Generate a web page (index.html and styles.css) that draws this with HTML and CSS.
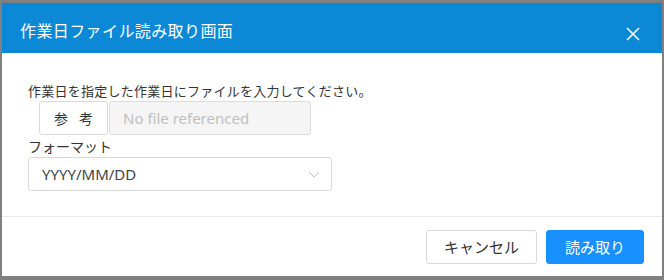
FILE: index.html
```html
<!DOCTYPE html>
<html lang="ja">
<head>
    <meta charset="UTF-8">
    <title>作業日ファイル読み取り画面</title>
    <link rel="stylesheet" href="styles.css">
</head>
<body>
    <div class="modal">
        <div class="modal-header">
            <div class="modal-title">作業日ファイル読み取り画面</div>
            <div class="modal-close">
                <svg width="14" height="14" viewBox="0 0 14 14">
                    <path d="M1 1L13 13M13 1L1 13" stroke="#fff" stroke-width="1.6" fill="none"/>
                </svg>
            </div>
        </div>
        <div class="modal-body">
            <p class="hint">作業日を指定した作業日にファイルを入力してください。</p>
            <div class="file-row">
                <div class="btn-ref">参 考</div>
                <div class="file-name">No file referenced</div>
            </div>
            <div class="label">フォーマット</div>
            <div class="select">
                <span>YYYY/MM/DD</span>
                <svg width="12" height="7" viewBox="0 0 12 7">
                    <path d="M1 1L6 6L11 1" stroke="#c4c4c4" stroke-width="1" fill="none"/>
                </svg>
            </div>
        </div>
        <div class="modal-footer">
            <div class="btn">キャンセル</div>
            <div class="btn btn-primary">読み取り</div>
        </div>
    </div>
</body>
</html>
```

FILE: styles.css
```css
*{
    padding: 0;
    margin: 0;
    box-sizing: border-box;
}
body{
    background-color: #808080;
    padding: 3px 2px 4px 2px;
    font-family: "Noto Sans", "Noto Sans CJK JP", sans-serif;
    color: #333;
}
.modal{
    width: 660px;
    height: 273px;
    background-color: #fff;
    display: flex;
    flex-direction: column;
}
.modal-header{
    height: 50px;
    background-color: #0b88d6;
    display: flex;
    justify-content: space-between;
    align-items: flex-start;
    padding: 16px 22px 0 18px;
}
.modal-title{
    color: #fff;
    font-size: 16px;
    letter-spacing: 0.4px;
    line-height: 22px;
    font-family: "Noto Sans CJK JP", sans-serif;
}
.modal-close{
    margin-top: 8px;
    width: 14px;
    height: 14px;
    display: flex;
}
.modal-body{
    flex: 1;
    padding: 29px 26px 0 26px;
    border-bottom: 1px solid #e8e8e8;
}
.hint{
    font-size: 13px;
    letter-spacing: 0.25px;
    line-height: 18px;
    color: #333;
    font-family: "Noto Sans CJK JP", sans-serif;
}
.file-row{
    display: flex;
    margin: 1px 0 0 11px;
    height: 34px;
}
.btn-ref{
    width: 69px;
    border: 1px solid #d9d9d9;
    border-radius: 3px;
    font-size: 14px;
    word-spacing: 8px;
    line-height: 32px;
    text-align: center;
    color: #333;
    font-family: "Noto Sans CJK JP", sans-serif;
}
.file-name{
    width: 202px;
    margin-left: 1px;
    background-color: #f5f5f5;
    border: 1px solid #dcdcdc;
    border-radius: 3px;
    font-size: 15px;
    line-height: 32px;
    padding-left: 13px;
    color: #bfbfbf;
}
.label{
    margin-top: 1px;
    font-size: 14px;
    line-height: 21px;
    color: #333;
    font-family: "Noto Sans CJK JP", sans-serif;
}
.select{
    width: 304px;
    height: 34px;
    border: 1px solid #d9d9d9;
    border-radius: 3px;
    display: flex;
    justify-content: space-between;
    align-items: center;
    padding: 0 11px 0 13px;
    font-size: 15px;
    color: #444;
}
.modal-footer{
    height: 59px;
    display: flex;
    justify-content: flex-end;
    align-items: center;
    gap: 9px;
    padding-right: 18px;
}
.btn{
    height: 34px;
    padding: 0 17px;
    border: 1px solid #d9d9d9;
    border-radius: 3px;
    font-size: 15px;
    line-height: 32px;
    color: #333;
    font-family: "Noto Sans CJK JP", sans-serif;
}
.btn-primary{
    background-color: #1890ff;
    border-color: #1890ff;
    color: #fff;
    padding: 0 18px;
}
```
